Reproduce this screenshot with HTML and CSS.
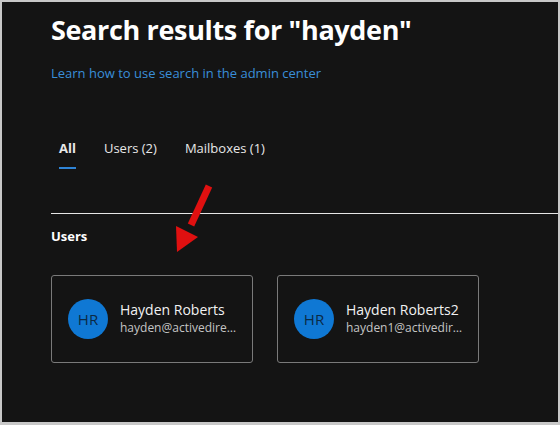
FILE: index.html
```html
<!DOCTYPE html>
<html lang="en">
<head>
    <meta charset="UTF-8">
    <meta name="viewport" content="width=device-width, initial-scale=1.0">
    <title>Search results</title>
    <link rel="stylesheet" href="styles.css">
</head>
<body>
    <div class="frame">
        <div class="page">
            <h1>Search results for "hayden"</h1>
            <a class="help-link" href="#">Learn how to use search in the admin center</a>

            <div class="tabs">
                <span class="tab active">All</span>
                <span class="tab">Users (2)</span>
                <span class="tab">Mailboxes (1)</span>
            </div>

            <hr class="divider">

            <h2>Users</h2>
            <div class="cards">
                <div class="card">
                    <div class="avatar">HR</div>
                    <div class="info">
                        <div class="name">Hayden Roberts</div>
                        <div class="email">hayden@activedirectorypro.com</div>
                    </div>
                </div>
                <div class="card">
                    <div class="avatar">HR</div>
                    <div class="info">
                        <div class="name">Hayden Roberts2</div>
                        <div class="email">hayden1@activedirectorypro.com</div>
                    </div>
                </div>
            </div>

            <!-- red pointer drawn over the page -->
            <svg class="arrow" width="60" height="80" viewBox="0 0 60 80">
                <line x1="49" y1="11" x2="31" y2="50" stroke="#e01010" stroke-width="7"/>
                <polygon points="17,77 16,51 38,62" fill="#e01010"/>
            </svg>
        </div>
    </div>
</body>
</html>
```

FILE: styles.css
```css
body {
    margin: 0;
    background-color: #c8c8c8;
    font-family: "Open Sans", "Noto Sans", sans-serif;
}
.frame {
    width: 556px;
    height: 420px;
    margin: 2px 0 0 2px;
    background-color: #141414;
    overflow: hidden;
}
.page {
    position: relative;
    padding: 11px 0 0 49px;
    color: #fff;
}
h1 {
    margin: 0;
    font-size: 27px;
    font-weight: 700;
    line-height: 34px;
    letter-spacing: -0.35px;
}
.help-link {
    display: block;
    margin-top: 17px;
    font-size: 13px;
    color: #3a8fd9;
    text-decoration: none;
}
.tabs {
    display: flex;
    gap: 28px;
    margin-top: 57px;
    padding-left: 8px;
}
.tab {
    font-size: 13px;
    line-height: 18px;
    padding-bottom: 10px;
    color: #e8e8e8;
}
.tab.active {
    font-weight: 700;
    border-bottom: 2px solid #2f84d6;
}
.divider {
    margin: 44px 0 0;
    border: 0;
    border-top: 1px solid #e6e6e6;
}
h2 {
    margin: 13px 0 0;
    font-size: 13px;
    font-weight: 700;
}
.cards {
    display: flex;
    gap: 24px;
    margin-top: 30px;
}
.card {
    display: flex;
    align-items: center;
    gap: 12px;
    width: 172px;
    height: 86px;
    padding: 0 12px 0 16px;
    border: 1px solid #7a7a7a;
    border-radius: 3px;
}
.avatar {
    flex: none;
    width: 40px;
    height: 40px;
    border-radius: 50%;
    background-color: #0f78d4;
    color: #0b2a45;
    font-size: 15px;
    line-height: 40px;
    text-align: center;
}
.info {
    min-width: 0;
}
.name {
    font-size: 14px;
    line-height: 18px;
    color: #f2f2f2;
}
.email {
    font-size: 12px;
    line-height: 18px;
    color: #c4c4c4;
    white-space: nowrap;
    overflow: hidden;
    text-overflow: ellipsis;
}
.arrow {
    position: absolute;
    left: 158px;
    top: 173px;
}
```
